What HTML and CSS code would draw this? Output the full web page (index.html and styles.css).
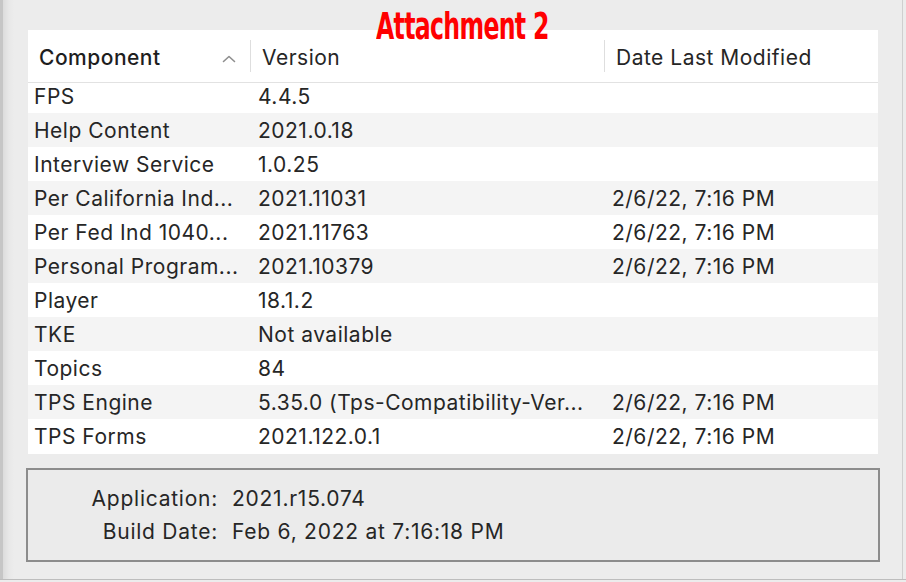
FILE: index.html
```html
<!DOCTYPE html>
<html>
<head>
<meta charset="utf-8">
<link rel="stylesheet" href="styles.css">
</head>
<body>
<div class="window">
  <div class="annot">Attachment 2</div>
  <div class="table">
    <div class="thead">
      <div class="th c1 sorted"><span>Component</span>
        <svg class="chev" width="14" height="8" viewBox="0 0 14 8"><path d="M1.5 6.5 L7 1.5 L12.5 6.5" fill="none" stroke="#8e8e8e" stroke-width="1.6" stroke-linecap="round" stroke-linejoin="round"/></svg>
      </div>
      <div class="sep"></div>
      <div class="th c2">Version</div>
      <div class="sep"></div>
      <div class="th c3">Date Last Modified</div>
    </div>
    <div class="tbody">
      <div class="rows">
        <div class="row"><div class="td c1">FPS</div><div class="td c2">4.4.5</div><div class="td c3"></div></div>
        <div class="row alt"><div class="td c1">Help Content</div><div class="td c2">2021.0.18</div><div class="td c3"></div></div>
        <div class="row"><div class="td c1">Interview Service</div><div class="td c2">1.0.25</div><div class="td c3"></div></div>
        <div class="row alt"><div class="td c1">Per California Ind...</div><div class="td c2">2021.11031</div><div class="td c3">2/6/22, 7:16 PM</div></div>
        <div class="row"><div class="td c1">Per Fed Ind 1040...</div><div class="td c2">2021.11763</div><div class="td c3">2/6/22, 7:16 PM</div></div>
        <div class="row alt"><div class="td c1">Personal Program...</div><div class="td c2">2021.10379</div><div class="td c3">2/6/22, 7:16 PM</div></div>
        <div class="row"><div class="td c1">Player</div><div class="td c2">18.1.2</div><div class="td c3"></div></div>
        <div class="row alt"><div class="td c1">TKE</div><div class="td c2">Not available</div><div class="td c3"></div></div>
        <div class="row"><div class="td c1">Topics</div><div class="td c2">84</div><div class="td c3"></div></div>
        <div class="row alt"><div class="td c1">TPS Engine</div><div class="td c2">5.35.0 (Tps-Compatibility-Ver...</div><div class="td c3">2/6/22, 7:16 PM</div></div>
        <div class="row"><div class="td c1">TPS Forms</div><div class="td c2">2021.122.0.1</div><div class="td c3">2/6/22, 7:16 PM</div></div>
      </div>
    </div>
  </div>
  <div class="info">
    <div class="irow"><div class="lbl">Application:</div><div class="val">2021.r15.074</div></div>
    <div class="irow"><div class="lbl">Build Date:</div><div class="val">Feb 6, 2022 at 7:16:18 PM</div></div>
  </div>
</div>
</body>
</html>
```

FILE: styles.css
```css
html, body {
  margin: 0;
  padding: 0;
  background: #ececec;
}
body {
  width: 906px;
  height: 582px;
  overflow: hidden;
  font-family: Inter, "Liberation Sans", sans-serif;
  color: #262626;
}
.window {
  position: relative;
  box-sizing: border-box;
  width: 906px;
  height: 580px;
  padding: 30px 0 0 28px;
  background: linear-gradient(to right, #c6c6c6 0, #c6c6c6 3px, #dcdcdc 3px, #e8e8e8 9px, #ececec 14px);
  border-bottom: 1px solid #bdbdbd;
  display: flex;
  flex-direction: column;
}
.window::after {
  content: "";
  position: absolute;
  top: 0;
  right: 3px;
  bottom: 0;
  width: 1px;
  background: #cfcfcf;
}
.annot {
  position: absolute;
  top: 3px;
  left: 376px;
  font-family: "DejaVu Sans", sans-serif;
  font-weight: 700;
  font-size: 34px;
  line-height: 40px;
  color: #ff0000;
  letter-spacing: -1px;
  transform: scale(0.695, 1.12);
  transform-origin: left top;
  white-space: nowrap;
  z-index: 2;
}
.table {
  width: 850px;
  height: 424px;
  background: #ffffff;
  display: flex;
  flex-direction: column;
}
.thead {
  height: 53px;
  box-sizing: border-box;
  padding-top: 3px;
  border-bottom: 1px solid #e2e2e2;
  display: flex;
  align-items: center;
  font-size: 21px;
  letter-spacing: 0.5px;
}
.th {
  box-sizing: border-box;
  padding-left: 11px;
  display: flex;
  align-items: center;
}
.thead .c1 { width: 222px; justify-content: space-between; padding-right: 14px; }
.thead .c2 { width: 353px; }
.thead .c3 { flex: 1; }
.sorted span { font-weight: 500; color: #1e1e1e; }
.chev { margin-top: 2px; }
.sep {
  width: 1px;
  height: 32px;
  margin-top: -3px;
  background: #dedede;
}
.tbody {
  flex: 1;
  overflow: hidden;
}
.rows {
  margin-top: -4px;
}
.row {
  height: 34px;
  box-sizing: border-box;
  padding-top: 1px;
  display: flex;
  align-items: center;
  font-size: 21px;
  letter-spacing: 0.5px;
}
.row.alt { background: #f4f4f4; }
.td {
  box-sizing: border-box;
  padding-left: 6px;
  white-space: nowrap;
}
.row .c1 { width: 224px; }
.row .c2 { width: 354px; }
.row .c3 { flex: 1; }
.info {
  margin-top: 14px;
  margin-left: -2px;
  width: 854px;
  height: 94px;
  box-sizing: border-box;
  border: 2px solid #8c8c8c;
  background: #ebebeb;
  padding-top: 12px;
  display: flex;
  flex-direction: column;
  font-size: 21px;
  letter-spacing: 0.75px;
}
.irow {
  height: 33px;
  display: flex;
  align-items: center;
}
.lbl {
  width: 190px;
  text-align: right;
}
.val {
  padding-left: 14px;
}
```
